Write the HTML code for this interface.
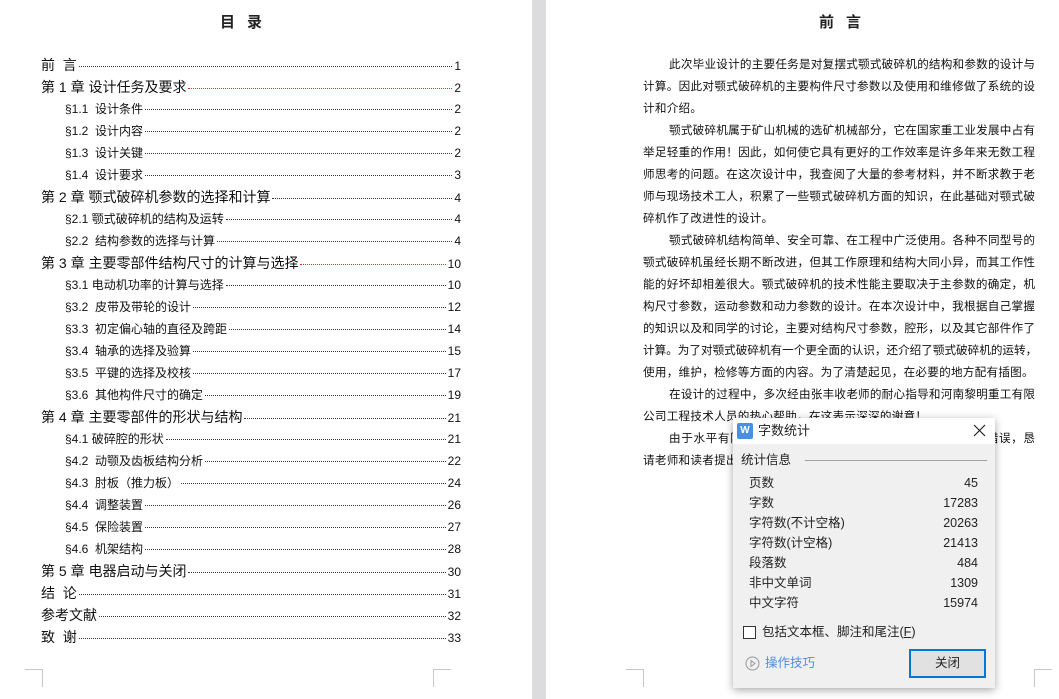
<!DOCTYPE html>
<html><head><meta charset="utf-8"><style>
*{margin:0;padding:0;box-sizing:border-box}
body{width:1059px;height:699px;overflow:hidden;background:#fff;position:relative;font-family:"Liberation Sans","Noto Sans CJK SC",sans-serif;color:#111}
.band{position:absolute;left:532px;top:0;width:14px;height:699px;background:#dcdcde}
.title{position:absolute;font-size:15px;font-weight:bold;letter-spacing:12px;color:#222}
.row{position:absolute;left:41px;width:420px;display:flex;align-items:baseline;white-space:nowrap;height:22px;line-height:22px}
.row.c{font-size:14px}
.row.s{font-size:12px;left:65px;width:396px}
.row .d{flex:1;border-bottom:1px dotted #334;margin:0 2px;transform:translateY(-3px)}
.row .d.r{border-color:#c33}
.row .n{font-size:12px}
.p{position:absolute;left:643px;width:392px;font-size:11.6px;line-height:22px;height:22px;white-space:nowrap;overflow:hidden;letter-spacing:0.25px}
.p.j{text-align:justify;text-align-last:justify;letter-spacing:0}
.p.i{padding-left:26px}
.cor{position:absolute;border-color:#c8c8c8;border-style:solid;border-width:0}
.dlg{position:absolute;left:733px;top:418px;width:262px;height:270px;background:#f0f0f0;box-shadow:0 2px 8px rgba(0,0,0,.35);font-size:13px;color:#222}
.dlg .tb{height:26px;background:#fff;position:relative}
.st,.sv{position:absolute;font-size:12.5px;line-height:18px;height:18px}
.st{left:16px}
.sv{right:17px}
</style></head><body>
<div class="band"></div>
<div class="title" style="left:220px;top:11px">目录</div>
<div class="title" style="left:819px;top:11px">前言</div>

<div class="row c" style="top:54px"><span>前&nbsp;&nbsp;言</span><span class="d"></span><span class="n">1</span></div>
<div class="row c" style="top:76px"><span>第 1 章&nbsp;设计任务及要求</span><span class="d r"></span><span class="n">2</span></div>
<div class="row s" style="top:98px"><span>§1.1&nbsp;&nbsp;设计条件</span><span class="d"></span><span class="n">2</span></div>
<div class="row s" style="top:120px"><span>§1.2&nbsp;&nbsp;设计内容</span><span class="d"></span><span class="n">2</span></div>
<div class="row s" style="top:142px"><span>§1.3&nbsp;&nbsp;设计关键</span><span class="d"></span><span class="n">2</span></div>
<div class="row s" style="top:164px"><span>§1.4&nbsp;&nbsp;设计要求</span><span class="d"></span><span class="n">3</span></div>
<div class="row c" style="top:186px"><span>第 2 章&nbsp;颚式破碎机参数的选择和计算</span><span class="d"></span><span class="n">4</span></div>
<div class="row s" style="top:208px"><span>§2.1&nbsp;颚式破碎机的结构及运转</span><span class="d"></span><span class="n">4</span></div>
<div class="row s" style="top:230px"><span>§2.2&nbsp;&nbsp;结构参数的选择与计算</span><span class="d"></span><span class="n">4</span></div>
<div class="row c" style="top:252px"><span>第 3 章&nbsp;主要零部件结构尺寸的计算与选择</span><span class="d r"></span><span class="n">10</span></div>
<div class="row s" style="top:274px"><span>§3.1&nbsp;电动机功率的计算与选择</span><span class="d"></span><span class="n">10</span></div>
<div class="row s" style="top:296px"><span>§3.2&nbsp;&nbsp;皮带及带轮的设计</span><span class="d"></span><span class="n">12</span></div>
<div class="row s" style="top:318px"><span>§3.3&nbsp;&nbsp;初定偏心轴的直径及跨距</span><span class="d"></span><span class="n">14</span></div>
<div class="row s" style="top:340px"><span>§3.4&nbsp;&nbsp;轴承的选择及验算</span><span class="d"></span><span class="n">15</span></div>
<div class="row s" style="top:362px"><span>§3.5&nbsp;&nbsp;平键的选择及校核</span><span class="d"></span><span class="n">17</span></div>
<div class="row s" style="top:384px"><span>§3.6&nbsp;&nbsp;其他构件尺寸的确定</span><span class="d"></span><span class="n">19</span></div>
<div class="row c" style="top:406px"><span>第 4 章&nbsp;主要零部件的形状与结构</span><span class="d"></span><span class="n">21</span></div>
<div class="row s" style="top:428px"><span>§4.1&nbsp;破碎腔的形状</span><span class="d"></span><span class="n">21</span></div>
<div class="row s" style="top:450px"><span>§4.2&nbsp;&nbsp;动颚及齿板结构分析</span><span class="d"></span><span class="n">22</span></div>
<div class="row s" style="top:472px"><span>§4.3&nbsp;&nbsp;肘板（推力板）</span><span class="d"></span><span class="n">24</span></div>
<div class="row s" style="top:494px"><span>§4.4&nbsp;&nbsp;调整装置</span><span class="d"></span><span class="n">26</span></div>
<div class="row s" style="top:516px"><span>§4.5&nbsp;&nbsp;保险装置</span><span class="d"></span><span class="n">27</span></div>
<div class="row s" style="top:538px"><span>§4.6&nbsp;&nbsp;机架结构</span><span class="d"></span><span class="n">28</span></div>
<div class="row c" style="top:560px"><span>第 5 章&nbsp;电器启动与关闭</span><span class="d"></span><span class="n">30</span></div>
<div class="row c" style="top:582px"><span>结&nbsp;&nbsp;论</span><span class="d"></span><span class="n">31</span></div>
<div class="row c" style="top:604px"><span>参考文献</span><span class="d"></span><span class="n">32</span></div>
<div class="row c" style="top:626px"><span>致&nbsp;&nbsp;谢</span><span class="d"></span><span class="n">33</span></div>

<div class="p j i" style="top:54px">此次毕业设计的主要任务是对复摆式颚式破碎机的结构和参数的设计与</div>
<div class="p j" style="top:76px">计算。因此对颚式破碎机的主要构件尺寸参数以及使用和维修做了系统的设</div>
<div class="p" style="top:98px">计和介绍。</div>
<div class="p j i" style="top:120px">颚式破碎机属于矿山机械的选矿机械部分，它在国家重工业发展中占有</div>
<div class="p j" style="top:142px">举足轻重的作用！因此，如何使它具有更好的工作效率是许多年来无数工程</div>
<div class="p j" style="top:164px">师思考的问题。在这次设计中，我查阅了大量的参考材料，并不断求教于老</div>
<div class="p j" style="top:186px">师与现场技术工人，积累了一些颚式破碎机方面的知识，在此基础对颚式破</div>
<div class="p" style="top:208px">碎机作了改进性的设计。</div>
<div class="p j i" style="top:230px">颚式破碎机结构简单、安全可靠、在工程中广泛使用。各种不同型号的</div>
<div class="p j" style="top:252px">颚式破碎机虽经长期不断改进，但其工作原理和结构大同小异，而其工作性</div>
<div class="p j" style="top:274px">能的好坏却相差很大。颚式破碎机的技术性能主要取决于主参数的确定，机</div>
<div class="p j" style="top:296px">构尺寸参数，运动参数和动力参数的设计。在本次设计中，我根据自己掌握</div>
<div class="p j" style="top:318px">的知识以及和同学的讨论，主要对结构尺寸参数，腔形，以及其它部件作了</div>
<div class="p j" style="top:340px">计算。为了对颚式破碎机有一个更全面的认识，还介绍了颚式破碎机的运转，</div>
<div class="p" style="top:362px">使用，维护，检修等方面的内容。为了清楚起见，在必要的地方配有插图。</div>
<div class="p j i" style="top:384px">在设计的过程中，多次经由张丰收老师的耐心指导和河南黎明重工有限</div>
<div class="p" style="top:406px">公司工程技术人员的热心帮助，在这表示深深的谢意！</div>
<div class="p j i" style="top:428px">由于水平有限，设计中难免存在不足和错误之处，敬请指正错误，恳</div>
<div class="p" style="top:450px">请老师和读者提出宝贵意见。</div>

<div class="cor" style="left:25px;top:669px;width:18px;height:18px;border-top-width:1px;border-right-width:1px"></div>
<div class="cor" style="left:433px;top:669px;width:18px;height:18px;border-top-width:1px;border-left-width:1px"></div>
<div class="cor" style="left:626px;top:669px;width:18px;height:18px;border-top-width:1px;border-right-width:1px"></div>
<div class="cor" style="left:1034px;top:669px;width:18px;height:18px;border-top-width:1px;border-left-width:1px"></div>

<div class="dlg">
 <div class="tb">
  <div style="position:absolute;left:4px;top:5px;width:16px;height:16px;background:#4a90e2;border-radius:2px;color:#fff;font-size:10px;text-align:center;line-height:16px;font-weight:bold">W</div>
  <div style="position:absolute;left:25px;top:4px;font-size:13px;line-height:18px">字数统计</div>
  <svg style="position:absolute;left:240px;top:6px" width="13" height="13"><path d="M1 1L12 12M12 1L1 12" stroke="#222" stroke-width="1.2"/></svg>
 </div>
 <div style="position:absolute;left:8px;top:33px;font-size:12.5px;line-height:18px">统计信息</div>
 <div style="position:absolute;left:72px;top:42px;border-top:1px solid #a0a0a0;width:182px"></div>
 <div class="st" style="top:56px">页数</div><div class="sv" style="top:56px">45</div>
 <div class="st" style="top:76px">字数</div><div class="sv" style="top:76px">17283</div>
 <div class="st" style="top:96px">字符数(不计空格)</div><div class="sv" style="top:96px">20263</div>
 <div class="st" style="top:116px">字符数(计空格)</div><div class="sv" style="top:116px">21413</div>
 <div class="st" style="top:136px">段落数</div><div class="sv" style="top:136px">484</div>
 <div class="st" style="top:156px">非中文单词</div><div class="sv" style="top:156px">1309</div>
 <div class="st" style="top:176px">中文字符</div><div class="sv" style="top:176px">15974</div>
 <div style="position:absolute;left:10px;top:208px;width:13px;height:13px;border:1px solid #333;background:#fff"></div>
 <div style="position:absolute;left:29px;top:205px;font-size:12.5px;line-height:18px">包括文本框、脚注和尾注(<u>F</u>)</div>
 <svg style="position:absolute;left:12px;top:238px" width="15" height="15"><circle cx="7.5" cy="7.5" r="6.5" fill="none" stroke="#999"/><path d="M6 4.5L10 7.5L6 10.5Z" fill="none" stroke="#999"/></svg>
 <div style="position:absolute;left:32px;top:236px;font-size:12.5px;line-height:18px;color:#4a8fe0">操作技巧</div>
 <div style="position:absolute;left:176px;top:231px;width:77px;height:29px;border:2px solid #0078d7;background:#e1e1e1;text-align:center;line-height:25px;font-size:12.5px">关闭</div>
</div>
</body></html>
